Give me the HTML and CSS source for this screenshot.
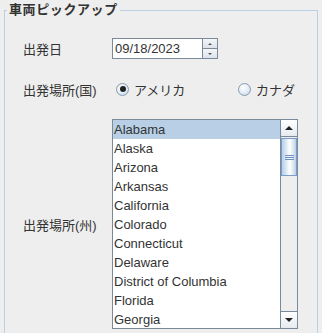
FILE: index.html
```html
<!DOCTYPE html>
<html>
<head>
  <title>車両ピックアップ</title>
  <link rel="stylesheet" href="styles.css">
</head>
<body>
  <fieldset class="pickup">
    <legend>車両ピックアップ</legend>
    <div class="form">
      <div class="field-label">出発日</div>
      <div class="spinner">
        <div class="spinner-text">09/18/2023</div>
        <div class="spinner-buttons">
          <div class="spin-btn"><span class="tri-up small"></span></div>
          <div class="spin-btn"><span class="tri-down small"></span></div>
        </div>
      </div>

      <div class="field-label">出発場所(国)</div>
      <div class="radios">
        <div class="radio"><span class="radio-dot checked"></span>アメリカ</div>
        <div class="radio"><span class="radio-dot"></span>カナダ</div>
      </div>

      <div class="field-label">出発場所(州)</div>
      <div class="list-box">
        <ul class="list">
          <li class="selected">Alabama</li>
          <li>Alaska</li>
          <li>Arizona</li>
          <li>Arkansas</li>
          <li>California</li>
          <li>Colorado</li>
          <li>Connecticut</li>
          <li>Delaware</li>
          <li>District of Columbia</li>
          <li>Florida</li>
          <li>Georgia</li>
        </ul>
        <div class="scrollbar">
          <div class="scroll-btn"><span class="tri-up"></span></div>
          <div class="track">
            <div class="thumb">
              <span class="grip"></span>
              <span class="grip"></span>
              <span class="grip"></span>
            </div>
          </div>
          <div class="scroll-btn"><span class="tri-down"></span></div>
        </div>
      </div>
    </div>
  </fieldset>
</body>
</html>
```

FILE: styles.css
```css
html,
body {
  height: 100%;
}

body {
  margin: 0;
  display: flex;
  flex-direction: column;
  background-color: #eeeeee;
  overflow: hidden;
  font-family: "Liberation Sans", "Noto Sans CJK JP", sans-serif;
  font-size: 13px;
  color: #333333;
}

.pickup {
  flex: 1;
  margin: 2px 0 0 4px;
  padding: 0;
  width: 312px;
  min-width: 0;
  min-height: 0;
  border: 1px solid #b8cfe5;
  border-bottom: none;
  box-sizing: content-box;
}

.pickup legend {
  margin-left: 2px;
  padding: 0 2px;
  font-weight: bold;
  font-size: 13px;
  letter-spacing: 0.6px;
  line-height: 16px;
  color: #333333;
}

.form {
  display: grid;
  grid-template-columns: 89px 186px;
  row-gap: 20px;
  align-items: center;
  padding: 20px 0 0 18px;
}

.field-label {
  white-space: nowrap;
}

/* spinner */
.spinner {
  display: flex;
  width: 106px;
  height: 21px;
}

.spinner-text {
  width: 90px;
  height: 21px;
  box-sizing: border-box;
  border: 1px solid #7a8a99;
  border-right: none;
  background-color: white;
  padding: 0 2px;
  line-height: 19px;
}

.spinner-buttons {
  display: flex;
  flex-direction: column;
  width: 16px;
}

.spin-btn {
  flex: 1;
  display: flex;
  justify-content: center;
  align-items: center;
  border: 1px solid #7a8a99;
  background: linear-gradient(#f4f6f8, #dde3ea);
}

.spin-btn + .spin-btn {
  border-top: none;
}

/* radios */
.radios {
  display: flex;
  justify-content: space-between;
  height: 20px;
  align-items: center;
  padding-right: 3px;
}

.radio {
  display: flex;
  align-items: center;
  gap: 5px;
  margin-left: 4px;
}

.radio-dot {
  width: 13px;
  height: 13px;
  box-sizing: border-box;
  border-radius: 50%;
  border: 1px solid #8a9aad;
  background: radial-gradient(circle at 40% 35%, #ffffff 0%, #e4edf7 50%, #b8cfe5 100%);
  display: flex;
  justify-content: center;
  align-items: center;
}

.radio-dot.checked::after {
  content: "";
  width: 6px;
  height: 6px;
  border-radius: 50%;
  background-color: #222222;
}

/* list */
.list-box {
  display: flex;
  height: 210px;
  box-sizing: border-box;
  border: 1px solid #7a8a99;
  background-color: white;
}

.list {
  flex: 1;
  margin: 0;
  padding: 0;
  list-style: none;
  overflow: hidden;
}

.list li {
  height: 19px;
  line-height: 19px;
  padding-left: 1px;
  white-space: nowrap;
}

.list li.selected {
  background-color: #b8cfe5;
}

.scrollbar {
  width: 16px;
  display: flex;
  flex-direction: column;
  border-left: 1px solid #7a8a99;
  background-color: #eeeeee;
}

.scroll-btn {
  height: 16px;
  display: flex;
  justify-content: center;
  align-items: center;
  background: linear-gradient(#ffffff, #e6ebf0);
}

.scroll-btn:first-child {
  border-bottom: 1px solid #7a8a99;
}

.scroll-btn:last-child {
  border-top: 1px solid #7a8a99;
}

.track {
  flex: 1;
  padding-top: 1px;
}

.thumb {
  height: 38px;
  box-sizing: border-box;
  border: 1px solid #7a9ccc;
  background: linear-gradient(90deg, #b8cfe5, #dce8f4 30%, #ffffff 55%, #dce8f4 80%, #b8cfe5);
  display: flex;
  flex-direction: column;
  justify-content: center;
  align-items: center;
  gap: 1px;
}

.grip {
  width: 9px;
  height: 1px;
  background-color: #6f8fbf;
}

.tri-up {
  width: 0;
  height: 0;
  border-left: 4px solid transparent;
  border-right: 4px solid transparent;
  border-bottom: 4px solid #222222;
}

.tri-down {
  width: 0;
  height: 0;
  border-left: 4px solid transparent;
  border-right: 4px solid transparent;
  border-top: 4px solid #222222;
}

.tri-up.small {
  border-left-width: 2px;
  border-right-width: 2px;
  border-bottom-width: 2px;
  border-bottom-color: #555555;
}

.tri-down.small {
  border-left-width: 2px;
  border-right-width: 2px;
  border-top-width: 2px;
  border-top-color: #555555;
}
```
